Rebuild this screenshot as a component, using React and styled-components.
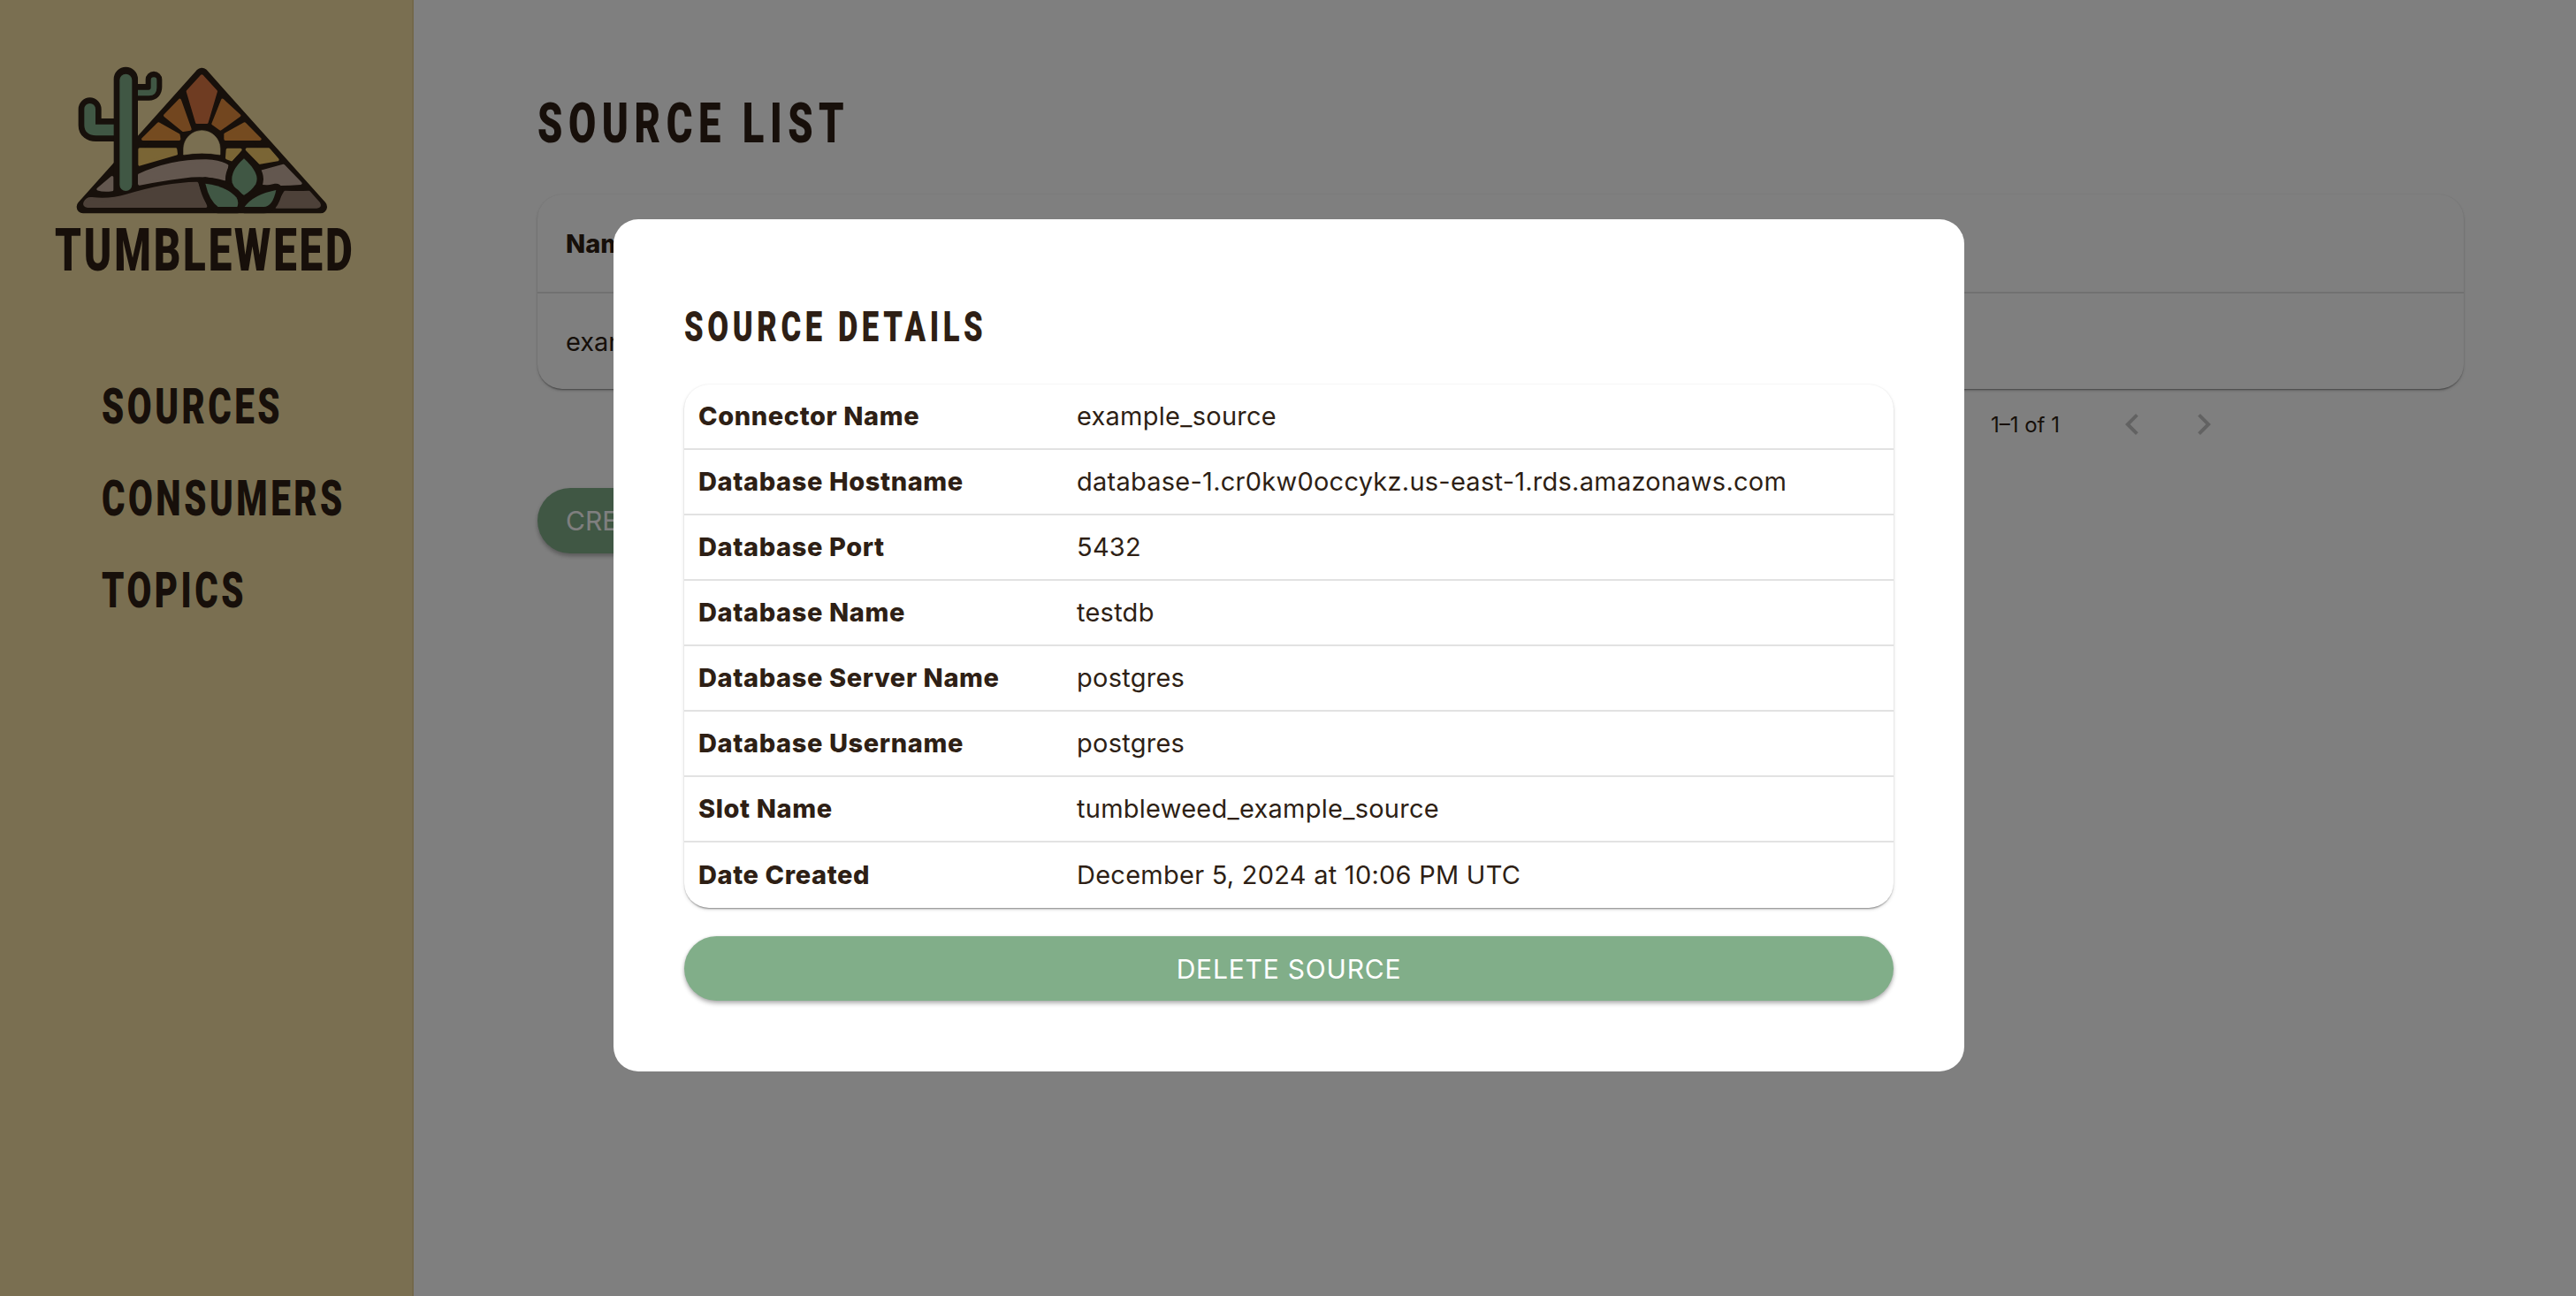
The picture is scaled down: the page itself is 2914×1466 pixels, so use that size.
import React from 'react'
import styled, { createGlobalStyle, css } from 'styled-components'
import { MdKeyboardArrowLeft, MdKeyboardArrowRight } from 'react-icons/md'

const ink = '#2e1f15'
const green = '#81ae89'
const bodyFont = `'Inter', 'Liberation Sans', sans-serif`

// no condensed display face is installed, so squeeze Roboto Black
const display = css`
  font-family: 'Roboto', 'Liberation Sans', sans-serif;
  font-weight: 900;
  transform: scaleX(0.72);
  transform-origin: left center;
  white-space: nowrap;
`

const GlobalStyle = createGlobalStyle`
  html, body {
    margin: 0;
    background: #fff;
  }
  body {
    font-family: ${bodyFont};
    color: ${ink};
  }
`

const Layout = styled.div`
  display: flex;
  height: 1466px;
  overflow: hidden;
`

const Sidebar = styled.aside`
  flex: 0 0 468px;
  min-width: 0;
  box-sizing: border-box;
  background: #f4dfa2;
  border-right: 2px solid #e6d195;
  padding-top: 60px;
  display: flex;
  flex-direction: column;
`

const LogoMark = styled.svg`
  display: block;
  width: 330px;
  height: 200px;
  margin-left: 60px;
`

const Wordmark = styled.div`
  ${display}
  font-size: 66px;
  line-height: 48px;
  letter-spacing: 3.9px;
  margin: 0 0 0 62px;
`

const Nav = styled.nav`
  display: flex;
  flex-direction: column;
  gap: 48px;
  margin: 124px 0 0 115px;
`

const NavItem = styled.a`
  ${display}
  display: block;
  font-size: 56px;
  line-height: 56px;
  letter-spacing: 4.9px;
`

const Main = styled.main`
  flex: 1;
  padding: 112px 127px 0 140px;
  min-width: 0;
`

const PageTitle = styled.h1`
  ${display}
  margin: 0 0 52px;
  font-size: 63px;
  line-height: 56px;
  letter-spacing: 9.1px;
`

const Card = styled.div`
  background: #fff;
  border-radius: 28px;
  box-shadow: 0 2px 2px -1px rgba(0, 0, 0, 0.4), 0 2px 4px rgba(0, 0, 0, 0.12), 0 0 2px rgba(0, 0, 0, 0.08);
`

const ListRow = styled.div`
  display: grid;
  grid-template-columns: repeat(4, 1fr);
  height: ${props => (props.$head ? '112px' : '108px')};
  box-sizing: border-box;
  align-items: center;
  font-size: 29px;
  font-weight: ${props => (props.$head ? 800 : 400)};
  border-bottom: ${props => (props.$head ? '2px solid #e2e2e2' : 'none')};
`

const ListCell = styled.div`
  padding: 0 32px;
  white-space: nowrap;
`

const Pagination = styled.div`
  display: flex;
  align-items: center;
  justify-content: flex-end;
  height: 80px;
  padding-right: 270px;
  font-size: 24px;
  gap: 33px;
  color: ${ink};
`

const PageRange = styled.span`
  margin-right: 25px;
`

const PageButton = styled.span`
  display: flex;
  color: #c4c4c4;
  font-size: 48px;
`

const CreateButton = styled.button`
  display: block;
  margin-top: 32px;
  height: 74px;
  width: 340px;
  border: 0;
  border-radius: 37px;
  background: ${green};
  color: #fff;
  font-family: ${bodyFont};
  font-size: 30px;
  text-align: left;
  padding: 0 32px;
  box-shadow: 0 3px 5px rgba(0, 0, 0, 0.3);
`

const Overlay = styled.div`
  position: fixed;
  inset: 0;
  background: rgba(0, 0, 0, 0.5);
  display: flex;
  align-items: center;
  justify-content: center;
  padding-bottom: 6px;
  box-sizing: border-box;
`

const Modal = styled.div`
  box-sizing: border-box;
  width: 1528px;
  margin-left: 2px;
  background: #fff;
  border-radius: 28px;
  padding: 100px 80px 80px;
`

const ModalTitle = styled.h2`
  ${display}
  margin: 0 0 43px;
  font-size: 48px;
  line-height: 44px;
  letter-spacing: 6.4px;
`

const DetailCard = styled(Card)`
  overflow: hidden;
`

const DetailRow = styled.div`
  display: grid;
  grid-template-columns: 428px 1fr;
  height: 74px;
  box-sizing: border-box;
  padding: 0 16px 1px;
  align-items: center;
  font-size: 29px;
  border-bottom: ${props => (props.$last ? 'none' : '2px solid #e2e2e2')};
`

const DetailLabel = styled.div`
  font-weight: 800;
  letter-spacing: 0.6px;
`

const DetailValue = styled.div`
  letter-spacing: 0.25px;
`

const DeleteButton = styled.button`
  display: block;
  width: 100%;
  height: 73px;
  margin-top: 32px;
  border: 0;
  border-radius: 37px;
  background: ${green};
  color: #fff;
  font-family: ${bodyFont};
  font-size: 30px;
  letter-spacing: 0.8px;
  box-shadow: 0 3px 5px rgba(0, 0, 0, 0.3), 0 0 3px rgba(0, 0, 0, 0.1);
`

const details = [
  ['Connector Name', 'example_source'],
  ['Database Hostname', 'database-1.cr0kw0occykz.us-east-1.rds.amazonaws.com'],
  ['Database Port', '5432'],
  ['Database Name', 'testdb'],
  ['Database Server Name', 'postgres'],
  ['Database Username', 'postgres'],
  ['Slot Name', 'tumbleweed_example_source'],
  ['Date Created', 'December 5, 2024 at 10:06 PM UTC'],
]

// coordinates are in logo pixels at 3x
const Logo = () => (
  <LogoMark viewBox="0 0 990 600">
    <g strokeLinejoin="round" strokeLinecap="round" fill="none">
      <path d="M505 72 L908 522 H102 Z" fill="#2e2016" stroke="#2e2016" strokeWidth="44" />
      <path d="M125 190 V245 Q125 261 145 261 H215" stroke="#2e2016" strokeWidth="78" />
      <path d="M342 90 V115 Q342 133 325 133 H280" stroke="#2e2016" strokeWidth="56" />
      <path d="M125 190 V245 Q125 261 145 261 H215" stroke="#80ae88" strokeWidth="38" />
      <path d="M342 92 V118 Q342 135 325 135 H280" stroke="#80ae88" strokeWidth="20" />
      <path d="M247 88 V470" stroke="#2e2016" strokeWidth="82" />
    </g>
    <g strokeLinejoin="round" strokeWidth="10">
      <path d="M505 78 L553 130 L522 235 H488 L457 130 Z" fill="#de7945" stroke="#de7945" />
      <path d="M430 160 L465 258 L442 262 L380 212 Z" fill="#e58d3f" stroke="#e58d3f" />
      <path d="M575 160 L632 212 L568 258 L543 240 Z" fill="#e58d3f" stroke="#e58d3f" />
      <path d="M358 240 L426 278 L428 292 H305 Z" fill="#ea9640" stroke="#ea9640" />
      <path d="M650 240 L702 292 H585 L585 276 Z" fill="#ea9640" stroke="#ea9640" />
      <path d="M294 327 H416 L418 342 L294 378 Z" fill="#f4ca6a" stroke="#f4ca6a" />
      <path d="M592 328 H636 L606 362 L590 356 Z" fill="#f4ca6a" stroke="#f4ca6a" />
      <path d="M658 327 H732 L762 362 L702 372 Z" fill="#f4ca6a" stroke="#f4ca6a" />
      <path d="M443 325 A62 62 0 0 1 567 325 V345 Q505 334 443 345 Z" fill="#f4dfa2" stroke="#f4dfa2" strokeWidth="2" />
      <path d="M293 414 Q400 365 520 366 Q565 368 590 382 L583 428 Q520 408 440 420 Q360 430 293 444 Z" fill="#c6ae9e" stroke="#c6ae9e" />
      <path d="M708 402 L782 382 L840 442 Q770 448 714 442 Z" fill="#c6ae9e" stroke="#c6ae9e" />
      <path d="M200 422 V464 Q172 468 153 462 Z" fill="#c6ae9e" stroke="#c6ae9e" />
      <path d="M108 508 Q115 492 132 494 Q190 502 250 484 Q380 444 488 442 L518 520 H118 Q104 518 108 508 Z" fill="#9a8272" stroke="#9a8272" />
      <path d="M868 472 L902 510 Q908 522 895 522 H758 L788 472 Q830 474 868 472 Z" fill="#9a8272" stroke="#9a8272" />
    </g>
    <path d="M247 92 V447" fill="none" stroke="#80ae88" strokeWidth="42" strokeLinecap="round" />
    <g fill="#80ae88" stroke="#2e2016" strokeWidth="44" strokeLinejoin="round" paintOrder="stroke">
      <path d="M648 358 Q705 410 688 445 Q672 470 648 482 Q620 470 608 440 Q600 400 648 358 Z" />
      <path d="M517 443 Q590 452 622 490 Q632 505 625 522 H560 Q530 500 517 443 Z" />
      <path d="M757 465 Q745 522 715 522 H650 Q680 480 757 465 Z" />
    </g>
  </LogoMark>
)

const App = () => {
  return (
    <>
      <GlobalStyle />
      <Layout>
        <Sidebar>
          <Logo />
          <Wordmark>TUMBLEWEED</Wordmark>
          <Nav>
            <NavItem>SOURCES</NavItem>
            <NavItem>CONSUMERS</NavItem>
            <NavItem>TOPICS</NavItem>
          </Nav>
        </Sidebar>
        <Main>
          <PageTitle>SOURCE LIST</PageTitle>
          <Card>
            <ListRow $head>
              <ListCell>Name</ListCell>
              <ListCell>Database</ListCell>
              <ListCell>Date Created</ListCell>
              <ListCell />
            </ListRow>
            <ListRow>
              <ListCell>example_source</ListCell>
              <ListCell>testdb</ListCell>
              <ListCell>December 5, 2024 at 10:06 PM UTC</ListCell>
              <ListCell />
            </ListRow>
          </Card>
          <Pagination>
            <PageRange>1–1 of 1</PageRange>
            <PageButton><MdKeyboardArrowLeft /></PageButton>
            <PageButton><MdKeyboardArrowRight /></PageButton>
          </Pagination>
          <CreateButton>CREATE SOURCE</CreateButton>
        </Main>
      </Layout>
      <Overlay>
        <Modal>
          <ModalTitle>SOURCE DETAILS</ModalTitle>
          <DetailCard>
            {details.map(([label, value], i) => (
              <DetailRow key={label} $last={i === details.length - 1}>
                <DetailLabel>{label}</DetailLabel>
                <DetailValue>{value}</DetailValue>
              </DetailRow>
            ))}
          </DetailCard>
          <DeleteButton>DELETE SOURCE</DeleteButton>
        </Modal>
      </Overlay>
    </>
  )
}

export default App
